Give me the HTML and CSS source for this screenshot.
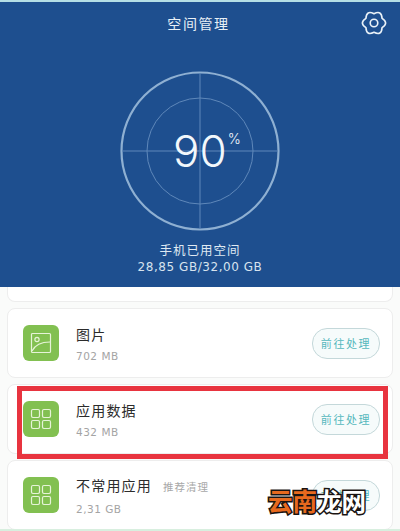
FILE: index.html
```html
<!DOCTYPE html>
<html lang="zh-CN">
<head>
<meta charset="utf-8">
<title>空间管理</title>
<link rel="stylesheet" href="styles.css">
</head>
<body>
<div class="page">
  <header class="hero">
    <div class="topbar">
      <span class="spacer"></span>
      <h1 class="title">空间管理</h1>
      <svg class="gear" viewBox="0 0 24 24" fill="none" stroke="#eaf2f8" stroke-width="1.5" stroke-linejoin="round">
        <path d="M19.45 7.7Q26 12 19.45 16.3Q19 24.12 12 20.6Q5 24.12 4.55 16.3Q-2 12 4.55 7.7Q5 -.12 12 3.4Q19 -.12 19.45 7.7z"/>
        <circle cx="12" cy="12" r="3.5"/>
      </svg>
    </div>
    <div class="gauge">
      <svg class="dial" viewBox="0 0 160 160" fill="none">
        <circle cx="80" cy="80" r="78.5" stroke="#8fb0d2" stroke-width="2.2"/>
        <circle cx="80" cy="80" r="53" stroke="#5f88ba" stroke-width="1"/>
        <path d="M80 2v156M2 80h156" stroke="#5f88ba" stroke-width="1"/>
      </svg>
      <div class="reading"><span class="num">90</span><span class="pct">%</span></div>
    </div>
    <p class="used-label">手机已用空间</p>
    <p class="used-value">28,85 GB/32,00 GB</p>
  </header>

  <main class="list">
    <div class="card card-cut"></div>

    <section class="card">
      <div class="icon">
        <svg viewBox="0 0 24 24" fill="none" stroke="#e6f3d8" stroke-width="1.2">
          <rect x="2.5" y="2.5" width="19" height="19" rx="1"/>
          <circle cx="8" cy="8.5" r="2.1"/>
          <path d="M3 20c3-6 8-9 18-9"/>
        </svg>
      </div>
      <div class="info">
        <div class="name">图片</div>
        <div class="size">702 MB</div>
      </div>
      <button class="action">前往处理</button>
    </section>

    <section class="card">
      <div class="icon">
        <svg viewBox="0 0 24 24" fill="none" stroke="#e6f3d8" stroke-width="1.2">
          <rect x="2.5" y="2.5" width="8" height="8" rx="1.4"/>
          <rect x="13.5" y="2.5" width="8" height="8" rx="1.4"/>
          <rect x="2.5" y="13.5" width="8" height="8" rx="1.4"/>
          <rect x="13.5" y="13.5" width="8" height="8" rx="1.4"/>
        </svg>
      </div>
      <div class="info">
        <div class="name">应用数据</div>
        <div class="size">432 MB</div>
      </div>
      <button class="action">前往处理</button>
      <div class="highlight"></div>
    </section>

    <section class="card">
      <div class="icon">
        <svg viewBox="0 0 24 24" fill="none" stroke="#e6f3d8" stroke-width="1.2">
          <rect x="2.5" y="2.5" width="8" height="8" rx="1.4"/>
          <rect x="13.5" y="2.5" width="8" height="8" rx="1.4"/>
          <rect x="2.5" y="13.5" width="8" height="8" rx="1.4"/>
          <rect x="13.5" y="13.5" width="8" height="8" rx="1.4"/>
        </svg>
      </div>
      <div class="info">
        <div class="name">不常用应用<span class="hint">推荐清理</span></div>
        <div class="size">2,31 GB</div>
      </div>
      <button class="action">前往处理</button>
    </section>
  </main>

  <div class="watermark"><span class="wm-orange">云南</span><span class="wm-white">龙网</span></div>
</div>
</body>
</html>
```

FILE: styles.css
```css
* { box-sizing: border-box; }

html, body {
  margin: 0;
  padding: 0;
  height: 100%;
  overflow: hidden;
}

body {
  background: #fafbfa;
  font-family: "Noto Sans CJK SC", "Liberation Sans", sans-serif;
}

.page {
  position: relative;
  width: 400px;
  height: 531px;
  overflow: hidden;
  border-top: 2px solid #b5dfe6;
  border-bottom: 2px solid #d8efdf;
}

.hero {
  height: 285px;
  background: #1e4f8f;
  color: #e6eff6;
  display: flex;
  flex-direction: column;
  align-items: center;
  padding: 0 12px 0;
}

.topbar {
  width: 100%;
  height: 42px;
  display: flex;
  align-items: center;
  justify-content: space-between;
}

.spacer { width: 24px; }

.title {
  margin: 0;
  font-size: 14px;
  font-weight: 400;
  letter-spacing: 1.6px;
  color: #e8f0f6;
}

.gear {
  width: 26px;
  height: 26px;
  margin-right: 1px;
  margin-top: 0;
}

.gauge {
  position: relative;
  width: 160px;
  height: 160px;
  margin-top: 27px;
}

.dial {
  display: block;
  width: 160px;
  height: 160px;
}

.reading {
  position: absolute;
  left: 0;
  right: 0;
  top: 0;
  bottom: 0;
  display: flex;
  justify-content: center;
  align-items: center;
  color: #f2f7fb;
  font-family: Inter, "Liberation Sans", sans-serif;
  font-weight: 300;
}

.num {
  font-size: 44px;
  line-height: 1;
  margin-left: 14px;
}

.pct {
  font-size: 14px;
  margin-top: -26px;
  margin-left: 1px;
}

.used-label {
  margin: 10px 0 0;
  font-size: 12.5px;
  line-height: 18px;
  letter-spacing: 1px;
  color: #dfe9f2;
}

.used-value {
  margin: 0;
  font-family: "DejaVu Sans", sans-serif;
  font-size: 12px;
  line-height: 16px;
  letter-spacing: 0.55px;
  color: #d7e3ee;
}

.list {
  display: flex;
  flex-direction: column;
  gap: 6px;
  padding: 0 7px;
}

.card {
  position: relative;
  height: 70px;
  flex: none;
  display: flex;
  align-items: center;
  padding: 0 12px 0 15px;
  background: #fff;
  border: 1px solid #ededed;
  border-radius: 8px;
}

.card-cut {
  height: 15px;
  border-top: 0;
  border-radius: 0 0 8px 8px;
}

.icon {
  width: 36px;
  height: 36px;
  flex: none;
  display: flex;
  align-items: center;
  justify-content: center;
  background: #82c051;
  border-radius: 6px;
}

.icon svg {
  width: 24px;
  height: 24px;
}

.info {
  flex: 1;
  margin-left: 17px;
  min-width: 0;
}

.name {
  font-size: 14px;
  line-height: 20px;
  letter-spacing: 1.2px;
  color: #2b2b2b;
}

.hint {
  margin-left: 11px;
  font-size: 10.5px;
  letter-spacing: 1px;
  color: #a8a8a8;
}

.size {
  margin-top: 5px;
  font-family: "DejaVu Sans", sans-serif;
  font-size: 10.5px;
  line-height: 14px;
  letter-spacing: 0.5px;
  color: #a4a4a4;
}

.action {
  width: 68px;
  height: 31px;
  flex: none;
  padding: 0;
  background: #f6fbfb;
  border: 1px solid #c4d8da;
  border-radius: 15px;
  font-family: inherit;
  font-size: 11px;
  letter-spacing: 1.6px;
  color: #55b8bd;
}

.highlight {
  position: absolute;
  left: 9px;
  right: 4px;
  top: 1px;
  height: 73px;
  border: 5px solid #e8343f;
}

.watermark {
  position: absolute;
  left: 268px;
  top: 485px;
  font-size: 24.5px;
  font-weight: 700;
  line-height: 28px;
  white-space: nowrap;
  -webkit-text-stroke: 3px #1a1412;
  paint-order: stroke fill;
}

.wm-orange { color: #e8691e; }
.wm-white { color: #ffffff; }
```
